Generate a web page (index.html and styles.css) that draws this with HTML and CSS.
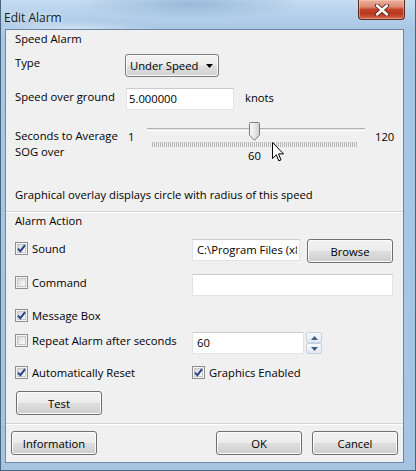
FILE: index.html
```html
<!DOCTYPE html>
<html>
<head>
<meta charset="utf-8">
<title>Edit Alarm</title>
<link rel="stylesheet" href="styles.css">
</head>
<body>
<div class="window">
  <div class="titlebar">
    <span class="title">Edit Alarm</span>
    <div class="close">
      <svg width="16" height="12" viewBox="0 0 16 12"><path d="M3 1.5 L13 10.5 M13 1.5 L3 10.5" stroke="#5a2418" stroke-width="4.2" stroke-linecap="round"/><path d="M3 1.5 L13 10.5 M13 1.5 L3 10.5" stroke="#ffffff" stroke-width="2.4" stroke-linecap="round"/></svg>
    </div>
  </div>
  <div class="client">
    <section class="box box-speed">
      <div class="box-label">Speed Alarm</div>
      <div class="row row-type">
        <span class="lbl">Type</span>
        <div class="combo"><span>Under Speed</span><svg width="7" height="4" viewBox="0 0 7 4"><path d="M0 0 H7 L3.5 4 Z" fill="#000"/></svg></div>
      </div>
      <div class="row row-sog">
        <span class="lbl">Speed over ground</span>
        <input class="input sog" type="text" value="5.000000" readonly>
        <span class="unit">knots</span>
      </div>
      <div class="row row-slider">
        <span class="lbl lbl-slider">Seconds to Average<br>SOG over</span>
        <span class="min">1</span>
        <div class="slider">
          <div class="track"></div>
          <div class="ticks"></div>
          <div class="val">60</div>
          <svg class="thumb" width="11" height="19" viewBox="0 0 11 19">
            <defs><linearGradient id="tg" x1="0" y1="0" x2="1" y2="0"><stop offset="0" stop-color="#fafafa"/><stop offset="0.5" stop-color="#e8e8e8"/><stop offset="1" stop-color="#cfcfcf"/></linearGradient></defs>
            <path d="M1.5 0.5 H9.5 Q10.5 0.5 10.5 1.5 V13 L5.5 18.2 L0.5 13 V1.5 Q0.5 0.5 1.5 0.5 Z" fill="url(#tg)" stroke="#7a7a7a"/>
          </svg>
          <svg class="cursor" width="13" height="21" viewBox="0 0 13 21"><path d="M0.5 0.5 V16.5 L4.3 12.8 L6.8 18.8 L9 17.9 L6.5 11.9 L11.5 11.9 Z" fill="#fff" stroke="#000" stroke-width="1" stroke-linejoin="miter"/></svg>
        </div>
        <span class="max">120</span>
      </div>
      <p class="note">Graphical overlay displays circle with radius of this speed</p>
    </section>
    <section class="box box-action">
      <div class="box-label">Alarm Action</div>
      <div class="arow r1">
        <label class="chk"><span class="cb on"><svg width="9" height="9" viewBox="0 0 9 9"><path d="M1 4.6 L3.4 7.2 L8 1.2" stroke="#24438a" stroke-width="1.9" fill="none"/></svg></span>Sound</label>
        <div class="c2">
          <input class="input path" type="text" value="C:\Program Files (x86)\OpenCPN\sounds\beep_ssl.wav" readonly>
          <button class="btn browse">Browse</button>
        </div>
      </div>
      <div class="arow r2">
        <label class="chk"><span class="cb"></span>Command</label>
        <div class="c2"><input class="input cmd" type="text" value="" readonly></div>
      </div>
      <div class="arow r3">
        <label class="chk"><span class="cb on"><svg width="9" height="9" viewBox="0 0 9 9"><path d="M1 4.6 L3.4 7.2 L8 1.2" stroke="#24438a" stroke-width="1.9" fill="none"/></svg></span>Message Box</label>
      </div>
      <div class="arow r4">
        <label class="chk"><span class="cb"></span>Repeat Alarm after seconds</label>
        <div class="c2">
          <input class="input spin" type="text" value="60" readonly>
          <div class="spinner">
            <div class="sb"><svg width="7" height="4" viewBox="0 0 7 4"><path d="M0 4 H7 L3.5 0 Z" fill="#3b5e8c"/></svg></div>
            <div class="sb"><svg width="7" height="4" viewBox="0 0 7 4"><path d="M0 0 H7 L3.5 4 Z" fill="#3b5e8c"/></svg></div>
          </div>
        </div>
      </div>
      <div class="arow r5">
        <label class="chk"><span class="cb on"><svg width="9" height="9" viewBox="0 0 9 9"><path d="M1 4.6 L3.4 7.2 L8 1.2" stroke="#24438a" stroke-width="1.9" fill="none"/></svg></span>Automatically Reset</label>
        <label class="chk"><span class="cb on"><svg width="9" height="9" viewBox="0 0 9 9"><path d="M1 4.6 L3.4 7.2 L8 1.2" stroke="#24438a" stroke-width="1.9" fill="none"/></svg></span>Graphics Enabled</label>
      </div>
      <div class="arow r6">
        <button class="btn test">Test</button>
      </div>
    </section>
    <div class="footer">
      <button class="btn">Information</button>
      <div class="spacer"></div>
      <button class="btn">OK</button>
      <button class="btn">Cancel</button>
    </div>
  </div>
</div>
</body>
</html>
```
FILE: styles.css
```css
* { box-sizing: border-box; }
html, body { margin: 0; padding: 0; }
body {
  width: 416px;
  height: 471px;
  overflow: hidden;
  font-family: "Open Sans", "Noto Sans", sans-serif;
  font-size: 11.25px;
  color: #000;
  background: #a9c6e2;
}
.window {
  width: 416px;
  height: 471px;
  display: flex;
  flex-direction: column;
  padding: 0 11px 7px 4px;
  border: 1px solid #4a6580;
  border-top: none;
  background:
    radial-gradient(ellipse 160px 22px at 190px 4px, rgba(120,160,200,0.55), rgba(120,160,200,0) 70%),
    radial-gradient(ellipse 120px 14px at 70px 30px, rgba(230,240,250,0.7), rgba(230,240,250,0) 70%),
    linear-gradient(180deg, #c6dcf1 0px, #b6d1eb 14px, #a8c7e4 30px, #a6c4e1 100%);
}
.titlebar {
  height: 29px;
  flex: none;
  display: flex;
  align-items: flex-start;
}
.title {
  margin-top: 10px;
  margin-left: -1px;
  font-size: 12px;
  line-height: 16px;
  color: #1a1a1a;
  text-shadow: 0 0 6px rgba(255,255,255,0.9);
}
.close {
  margin-left: auto;
  margin-right: -1px;
  width: 47px;
  height: 20px;
  border: 1px solid #5b2a1f;
  border-top: none;
  border-radius: 0 0 4px 4px;
  background: linear-gradient(180deg, #eab0a0 0%, #dd8c74 35%, #c0442a 50%, #b9361c 70%, #d3654a 100%);
  box-shadow: inset 0 0 0 1px rgba(255,210,190,0.45);
  display: flex;
  align-items: center;
  justify-content: center;
}
.client {
  flex: 1;
  border: 1px solid #6f88a2;
  background: #f0f0f0;
  display: flex;
  flex-direction: column;
  line-height: 15px;
}
.box { padding: 0 0 0 9px; }
.box-speed { padding-bottom: 9px; }
.box-action {
  border-top: 1px solid #d5d5d5;
  box-shadow: inset 0 1px 0 #ffffff;
  padding-bottom: 8px;
}
.box-label { padding-top: 1px; height: 16px; }
.row { display: flex; align-items: flex-start; }
.lbl { width: 110px; flex: none; padding-top: 1px; white-space: nowrap; }
.row-type { margin-top: 8px; height: 23px; }
.combo {
  width: 94px;
  height: 23px;
  border: 1px solid #7a7a7a;
  border-radius: 3px;
  background: linear-gradient(180deg, #f3f3f3 0%, #ececec 48%, #dedede 52%, #d2d2d2 100%);
  box-shadow: inset 0 0 0 1px #fbfbfb;
  display: flex;
  align-items: center;
  padding: 0 5px 0 4px;
  justify-content: space-between;
}
.row-sog { margin-top: 11px; height: 22px; }
.input {
  display: block;
  font: inherit;
  color: #000;
  line-height: 15px;
  height: 22px;
  margin: 0;
  background: #fff;
  border: 1px solid #e2e3e6;
  border-top-color: #c9cbd0;
  padding: 1px 2px 2px;
  outline: none;
}
.sog { width: 108px; margin-left: 1px; }
.unit { margin-left: 11px; padding-top: 2px; }
.row-slider { margin-top: 10px; height: 48px; }
.lbl-slider { width: 113px; padding-top: 8px; line-height: 16px; }
.min { width: 12px; padding-top: 9px; }
.slider {
  position: relative;
  width: 230px;
  height: 48px;
}
.track {
  margin: 8px 0 0 7px;
  width: 218px;
  height: 3px;
  border-top: 1px solid #b4b4b4;
  border-bottom: 1px solid #ffffff;
  background: #e4e4e4;
}
.ticks {
  margin: 11px 0 0 12px;
  width: 206px;
  height: 5px;
  background: repeating-linear-gradient(90deg, #a8a8a8 0px, #a8a8a8 1px, transparent 1px, transparent 2px);
  opacity: 0.8;
}
.val {
  margin: 1px 0 0 108px;
  width: 13px;
  text-align: center;
}
.thumb { position: absolute; left: 109px; top: 2px; }
.cursor { position: absolute; left: 132px; top: 22px; }
.max { margin-left: 5px; padding-top: 9px; }
.note { margin: 19px 0 0; height: 15px; white-space: nowrap; }

.arow { display: flex; align-items: flex-start; }
.r1 { margin-top: 11px; height: 24px; }
.r2 { margin-top: 11px; height: 22px; }
.r3 { margin-top: 13px; height: 13px; }
.r4 { margin-top: 10px; height: 22px; }
.r5 { margin-top: 12px; height: 13px; }
.r6 { margin-top: 12px; height: 24px; }
.chk {
  width: 177px;
  flex: none;
  display: flex;
  align-items: center;
  height: 13px;
  white-space: nowrap;
}
.r1 .chk { margin-top: 3px; }
.r2 .chk, .r4 .chk { margin-top: 2px; }
.cb {
  width: 13px;
  height: 13px;
  flex: none;
  margin-right: 4px;
  border: 1px solid #8e8f8f;
  background: #f4f4f4;
  position: relative;
}
.cb::before {
  content: "";
  position: absolute;
  left: 1px; top: 1px; right: 1px; bottom: 1px;
  border: 1px solid #c6c6c6;
  background: linear-gradient(135deg, #d6d6d6 0%, #f2f2f2 70%, #ffffff 100%);
}
.cb svg { position: absolute; left: 1px; top: 1px; }
.c2 { display: flex; align-items: flex-start; }
.path { width: 108px; padding-left: 4px; }
.cmd { width: 201px; }
.spin { width: 112px; padding-left: 4px; }
.browse { margin-left: 7px; }
.spinner {
  margin-left: 2px;
  width: 16px;
  height: 22px;
  display: flex;
  flex-direction: column;
}
.sb {
  height: 11px;
  border: 1px solid #c7d2de;
  background: linear-gradient(180deg, #f7f9fc, #e3e9f1);
  border-radius: 2px;
  display: flex;
  align-items: center;
  justify-content: center;
}
.btn {
  font: inherit;
  line-height: 15px;
  color: #000;
  width: 86px;
  height: 24px;
  padding: 0;
  border: 1px solid #707070;
  border-radius: 3px;
  background: linear-gradient(180deg, #f2f2f2 0%, #ebebeb 48%, #dddddd 52%, #cfcfcf 100%);
  box-shadow: inset 0 0 0 1px #fbfbfb;
  text-align: center;
}
.test { margin-left: 1px; }
.footer {
  border-top: 1px solid #d5d5d5;
  box-shadow: inset 0 1px 0 #ffffff;
  padding: 7px 5px 0 5px;
  display: flex;
  align-items: flex-start;
  gap: 10px;
  flex: 1;
}
.spacer { flex: 1; }
```
